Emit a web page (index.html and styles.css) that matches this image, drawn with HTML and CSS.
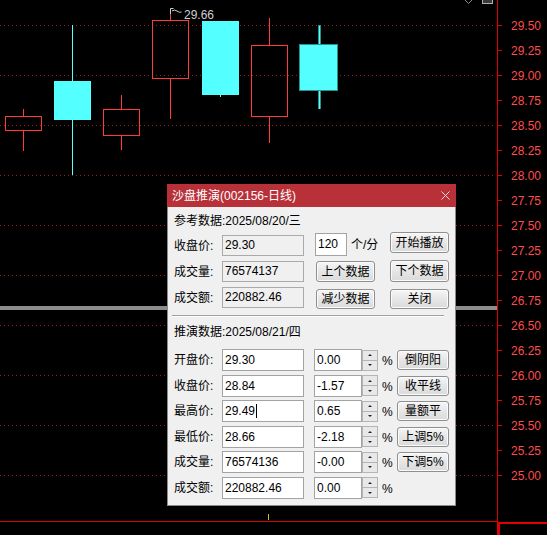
FILE: index.html
```html
<!DOCTYPE html>
<html>
<head>
<meta charset="utf-8">
<link rel="stylesheet" href="styles.css">
</head>
<body>
<svg class="chart" width="547" height="535" viewBox="0 0 547 535">
  <g class="grid">
    <line x1="0" y1="25.5" x2="494" y2="25.5"/>
    <line x1="0" y1="75.5" x2="494" y2="75.5"/>
    <line x1="0" y1="125.5" x2="494" y2="125.5"/>
    <line x1="0" y1="175.5" x2="494" y2="175.5"/>
    <line x1="0" y1="225.5" x2="494" y2="225.5"/>
    <line x1="0" y1="275.5" x2="494" y2="275.5"/>
    <line x1="0" y1="325.5" x2="494" y2="325.5"/>
    <line x1="0" y1="375.5" x2="494" y2="375.5"/>
    <line x1="0" y1="425.5" x2="494" y2="425.5"/>
    <line x1="0" y1="475.5" x2="494" y2="475.5"/>
  </g>
  <rect class="splitter" x="0" y="306" width="497" height="4"/>

  <!-- candles -->
  <g class="up">
    <line x1="23.5" y1="109" x2="23.5" y2="116"/><line x1="23.5" y1="131" x2="23.5" y2="151"/>
    <rect x="5.5" y="116.5" width="36" height="14"/>
    <line x1="121.5" y1="95" x2="121.5" y2="109"/><line x1="121.5" y1="136" x2="121.5" y2="150"/>
    <rect x="103.5" y="109.5" width="36" height="26"/>
    <line x1="170.5" y1="10" x2="170.5" y2="20"/><line x1="170.5" y1="79" x2="170.5" y2="119"/>
    <rect x="152.5" y="20.5" width="36" height="58"/>
    <line x1="269.5" y1="18" x2="269.5" y2="45"/><line x1="269.5" y1="117" x2="269.5" y2="143"/>
    <rect x="251.5" y="45.5" width="36" height="71"/>
  </g>
  <g class="down">
    <line x1="72.5" y1="25" x2="72.5" y2="175"/>
    <rect x="54" y="81" width="37" height="39"/>
    <line x1="220.5" y1="94" x2="220.5" y2="97"/>
    <rect x="202" y="21" width="37" height="74"/>
  </g>
  <g class="down-last">
    <line class="wick-edge" x1="319" y1="25" x2="319" y2="109"/>
    <line class="wick-core" x1="319" y1="25.5" x2="319" y2="108.5"/>
    <rect x="299.5" y="44.5" width="38" height="46"/>
  </g>

  <!-- max marker -->
  <path class="marker" d="M170.5 14 V8.5 H173.5 M172 11 Q174.5 9 177 11 T181.5 12"/>
  <text class="max-label" x="184" y="19" textLength="30" lengthAdjust="spacingAndGlyphs">29.66</text>

  <!-- top-right icons -->
  <path class="icon" d="M465 0 L468.5 3.5 L472 0"/>
  <rect class="icon-box" x="482.5" y="-3" width="10" height="6.5"/>

  <!-- axis -->
  <line class="axis" x1="497.5" y1="0" x2="497.5" y2="535"/>
  <g class="ticks">
    <line x1="497" y1="25.5" x2="502" y2="25.5"/><line x1="497" y1="50.5" x2="502" y2="50.5"/>
    <line x1="497" y1="75.5" x2="502" y2="75.5"/><line x1="497" y1="100.5" x2="502" y2="100.5"/>
    <line x1="497" y1="125.5" x2="502" y2="125.5"/><line x1="497" y1="150.5" x2="502" y2="150.5"/>
    <line x1="497" y1="175.5" x2="502" y2="175.5"/><line x1="497" y1="200.5" x2="502" y2="200.5"/>
    <line x1="497" y1="225.5" x2="502" y2="225.5"/><line x1="497" y1="250.5" x2="502" y2="250.5"/>
    <line x1="497" y1="275.5" x2="502" y2="275.5"/><line x1="497" y1="300.5" x2="502" y2="300.5"/>
    <line x1="497" y1="325.5" x2="502" y2="325.5"/><line x1="497" y1="350.5" x2="502" y2="350.5"/>
    <line x1="497" y1="375.5" x2="502" y2="375.5"/><line x1="497" y1="400.5" x2="502" y2="400.5"/>
    <line x1="497" y1="425.5" x2="502" y2="425.5"/><line x1="497" y1="450.5" x2="502" y2="450.5"/>
    <line x1="497" y1="475.5" x2="502" y2="475.5"/>
  </g>
  <g class="axis-labels">
    <text x="511" y="30.3" textLength="30" lengthAdjust="spacingAndGlyphs">29.50</text>
    <text x="511" y="55.3" textLength="30" lengthAdjust="spacingAndGlyphs">29.25</text>
    <text x="511" y="80.3" textLength="30" lengthAdjust="spacingAndGlyphs">29.00</text>
    <text x="511" y="105.3" textLength="30" lengthAdjust="spacingAndGlyphs">28.75</text>
    <text x="511" y="130.3" textLength="30" lengthAdjust="spacingAndGlyphs">28.50</text>
    <text x="511" y="155.3" textLength="30" lengthAdjust="spacingAndGlyphs">28.25</text>
    <text x="511" y="180.3" textLength="30" lengthAdjust="spacingAndGlyphs">28.00</text>
    <text x="511" y="205.3" textLength="30" lengthAdjust="spacingAndGlyphs">27.75</text>
    <text x="511" y="230.3" textLength="30" lengthAdjust="spacingAndGlyphs">27.50</text>
    <text x="511" y="255.3" textLength="30" lengthAdjust="spacingAndGlyphs">27.25</text>
    <text x="511" y="280.3" textLength="30" lengthAdjust="spacingAndGlyphs">27.00</text>
    <text x="511" y="305.3" textLength="30" lengthAdjust="spacingAndGlyphs">26.75</text>
    <text x="511" y="330.3" textLength="30" lengthAdjust="spacingAndGlyphs">26.50</text>
    <text x="511" y="355.3" textLength="30" lengthAdjust="spacingAndGlyphs">26.25</text>
    <text x="511" y="380.3" textLength="30" lengthAdjust="spacingAndGlyphs">26.00</text>
    <text x="511" y="405.3" textLength="30" lengthAdjust="spacingAndGlyphs">25.75</text>
    <text x="511" y="430.3" textLength="30" lengthAdjust="spacingAndGlyphs">25.50</text>
    <text x="511" y="455.3" textLength="30" lengthAdjust="spacingAndGlyphs">25.25</text>
    <text x="511" y="480.3" textLength="30" lengthAdjust="spacingAndGlyphs">25.00</text>
  </g>

  <!-- bottom -->
  <line class="axis" x1="0" y1="521.5" x2="498" y2="521.5"/>
  <rect class="corner" x="499" y="523" width="50" height="20"/>
  <line class="ytick" x1="268.5" y1="514" x2="268.5" y2="520"/>
</svg>

<div class="dialog">
  <div class="titlebar">
    <span class="title">沙盘推演(002156-日线)</span>
    <svg class="close" width="9" height="9" viewBox="0 0 9 9"><path d="M0.5 0.5 L8.5 8.5 M8.5 0.5 L0.5 8.5"/></svg>
  </div>
  <div class="body">
    <div class="caption">参考数据:2025/08/20/三</div>
    <div class="ref-rows">
      <div class="row">
        <span class="label">收盘价:</span>
        <div class="field ro">29.30</div>
        <div class="mid">
          <div class="field speed">120</div>
          <span class="unit">个/分</span>
        </div>
        <button class="btn btn-ref btn-r1">开始播放</button>
      </div>
      <div class="row">
        <span class="label">成交量:</span>
        <div class="field ro">76574137</div>
        <div class="mid">
          <button class="btn btn-ref btn-mid">上个数据</button>
        </div>
        <button class="btn btn-ref btn-r2">下个数据</button>
      </div>
      <div class="row">
        <span class="label">成交额:</span>
        <div class="field ro">220882.46</div>
        <div class="mid">
          <button class="btn btn-ref btn-mid btn-r3">减少数据</button>
        </div>
        <button class="btn btn-ref btn-r3">关闭</button>
      </div>
    </div>
    <div class="sep"></div>
    <div class="caption caption2">推演数据:2025/08/21/四</div>
    <div class="sim-rows">
      <div class="row2">
        <span class="label">开盘价:</span>
        <div class="field wide">29.30</div>
        <div class="field pct">0.00</div>
        <div class="spin"><span class="spin-up"></span><span class="spin-down"></span></div>
        <span class="percent">%</span>
        <button class="btn btn-sim">倒阴阳</button>
      </div>
      <div class="row2">
        <span class="label">收盘价:</span>
        <div class="field wide">28.84</div>
        <div class="field pct">-1.57</div>
        <div class="spin"><span class="spin-up"></span><span class="spin-down"></span></div>
        <span class="percent">%</span>
        <button class="btn btn-sim">收平线</button>
      </div>
      <div class="row2">
        <span class="label">最高价:</span>
        <div class="field wide">29.49<span class="caret"></span></div>
        <div class="field pct">0.65</div>
        <div class="spin"><span class="spin-up"></span><span class="spin-down"></span></div>
        <span class="percent">%</span>
        <button class="btn btn-sim">量额平</button>
      </div>
      <div class="row2">
        <span class="label">最低价:</span>
        <div class="field wide">28.66</div>
        <div class="field pct">-2.18</div>
        <div class="spin"><span class="spin-up"></span><span class="spin-down"></span></div>
        <span class="percent">%</span>
        <button class="btn btn-sim">上调5%</button>
      </div>
      <div class="row2">
        <span class="label">成交量:</span>
        <div class="field wide">76574136</div>
        <div class="field pct">-0.00</div>
        <div class="spin"><span class="spin-up"></span><span class="spin-down"></span></div>
        <span class="percent">%</span>
        <button class="btn btn-sim">下调5%</button>
      </div>
      <div class="row2">
        <span class="label">成交额:</span>
        <div class="field wide">220882.46</div>
        <div class="field pct">0.00</div>
        <div class="spin"><span class="spin-up"></span><span class="spin-down"></span></div>
        <span class="percent">%</span>
      </div>
    </div>
  </div>
</div>
</body>
</html>
```

FILE: styles.css
```css
* { box-sizing: border-box; }
html, body { margin: 0; padding: 0; background: #000; }
body {
  width: 547px;
  height: 535px;
  overflow: hidden;
  position: relative;
  font-family: "Liberation Sans", "Noto Sans CJK SC", sans-serif;
}

/* ---------- chart ---------- */
.chart { display: block; shape-rendering: crispEdges; }
.grid line { stroke: #a01c1c; stroke-width: 1; stroke-dasharray: 1 3; }
.splitter { fill: #8c8c8c; }
.up line, .up rect { fill: none; stroke: #ff3a3a; stroke-width: 1; }
.down line { stroke: #54ffff; stroke-width: 1; }
.down rect { fill: #54ffff; }
.down-last rect { fill: #54ffff; stroke: #2e8f8f; stroke-width: 1; }
.wick-edge { stroke: #2e8f8f; stroke-width: 3; }
.wick-core { stroke: #54ffff; stroke-width: 1; }
.marker { fill: none; stroke: #cfcfcf; stroke-width: 1; shape-rendering: auto; }
.max-label { font-family: "Liberation Sans", sans-serif; font-size: 13px; fill: #cfcfcf; }
.icon { fill: none; stroke: #8a8a8a; stroke-width: 1; shape-rendering: auto; }
.icon-box { fill: #3a3a3a; stroke: #b0b0b0; stroke-width: 1; }
.axis { stroke: #e00000; stroke-width: 1; }
.ticks line { stroke: #e00000; stroke-width: 1; }
.axis-labels text { font-family: "Liberation Sans", sans-serif; font-size: 13px; fill: #ff4d4d; }
.corner { fill: none; stroke: #e00000; stroke-width: 2; }
.ytick { stroke: #c8c800; stroke-width: 1; }

/* ---------- dialog ---------- */
.dialog {
  position: absolute;
  left: 167px;
  top: 184px;
  width: 289px;
  height: 322px;
  background: #f0f0f0;
  border: 1px solid #8a8a8a;
  border-top: none;
  font-size: 12px;
  color: #000;
  display: flex;
  flex-direction: column;
}
.titlebar {
  height: 23px;
  flex: none;
  background: #b83139;
  margin: 0 -1px;
  padding: 0 6px 0 5px;
  display: flex;
  align-items: center;
  justify-content: space-between;
}
.title { color: #fff; font-size: 12px; line-height: 16px; }
.close { display: block; }
.close path { stroke: #f3d6d6; stroke-width: 1; fill: none; }

.body { padding: 6px 0 0 6px; }
.caption { height: 16px; line-height: 16px; }
.caption2 { margin-top: 7px; }

.ref-rows { display: flex; flex-direction: column; gap: 5px; margin-top: 6px; }
.row { display: flex; align-items: flex-start; height: 21px; }
.row .label { align-self: center; }
.label { width: 48px; flex: none; line-height: 16px; }

.field {
  flex: none;
  height: 21px;
  border: 1px solid #a3a3a3;
  background: #fff;
  padding-left: 2px;
  line-height: 19px;
  white-space: nowrap;
}
.field.ro { width: 82px; background: #f0f0f0; border-color: #aaaaaa; }
.mid { width: 75px; flex: none; margin-left: 11px; display: flex; align-items: center; }
.speed { width: 32px; height: 23px; line-height: 21px; margin-top: -2px; }
.unit { margin-left: 4px; line-height: 16px; margin-top: -2px; }

.btn {
  flex: none;
  font-family: "Liberation Sans", "Noto Sans CJK SC", sans-serif;
  font-size: 12px;
  color: #000;
  padding: 0;
  border: 1px solid #8f8f8f;
  border-radius: 3px;
  background: linear-gradient(#f6f6f6, #e6e6e6 50%, #dadada);
  box-shadow: inset 0 0 0 1px #fbfbfb;
  line-height: 16px;
}
.btn-ref { width: 59px; height: 21px; }
.btn-mid { margin-left: 1px; }
.btn-r1 { margin-top: -3px; }
.btn-r2 { margin-top: -1px; height: 22px; }
.btn-r3 { margin-top: 2px; height: 20px; }

.sep {
  width: 272px;
  height: 2px;
  margin: 7px 0 0 -2px;
  border-top: 1px solid #a0a0a0;
  border-bottom: 1px solid #ffffff;
}

.sim-rows { display: flex; flex-direction: column; gap: 3.6px; margin-top: 9px; }
.row2 { display: flex; align-items: center; height: 22px; }
.field.wide { width: 82px; height: 22px; line-height: 20px; }
.field.pct { width: 48px; height: 22px; line-height: 20px; margin-left: 10px; }
.caret {
  display: inline-block;
  width: 1px;
  height: 14px;
  background: #000;
  vertical-align: -3px;
  margin-left: 1px;
}
.spin { width: 16px; height: 21px; flex: none; display: flex; flex-direction: column; }
.spin span {
  flex: 1;
  border: 1px solid #b4b4b4;
  background: #e8e8e8;
  display: flex;
  align-items: center;
  justify-content: center;
}
.spin span + span { border-top: none; }
.spin-up::after {
  content: "";
  border-left: 2px solid transparent;
  border-right: 2px solid transparent;
  border-bottom: 2px solid #222;
}
.spin-down::after {
  content: "";
  border-left: 2px solid transparent;
  border-right: 2px solid transparent;
  border-top: 2px solid #222;
}
.percent { width: 12px; margin-left: 4px; flex: none; line-height: 16px; margin-top: 2px; }
.btn-sim { width: 52px; height: 20px; margin-left: 3px; }
```
